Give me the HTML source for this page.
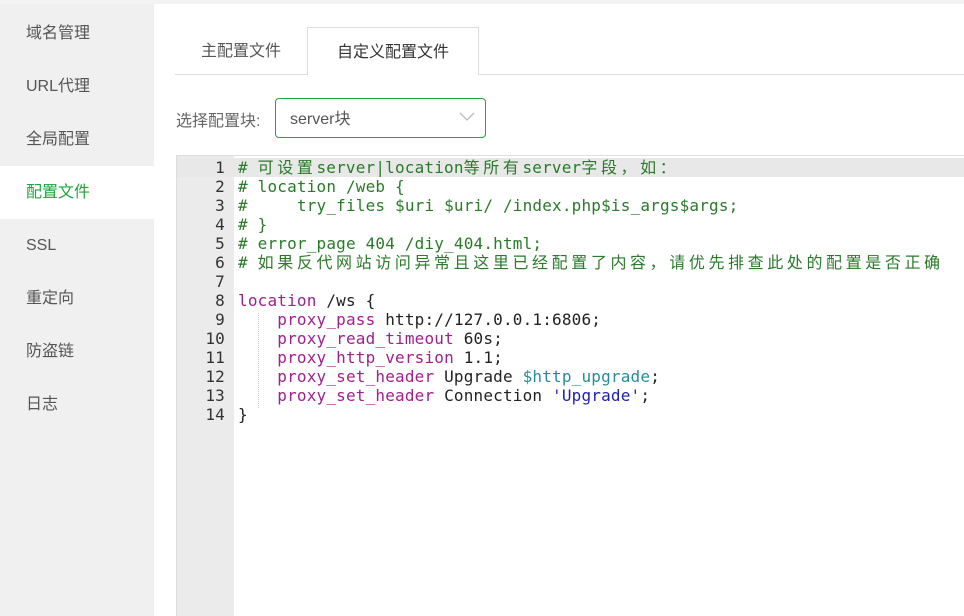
<!DOCTYPE html>
<html><head><meta charset="utf-8"><style>
*{margin:0;padding:0;box-sizing:border-box}
html,body{width:964px;height:616px;overflow:hidden}
body{background:#fff;font-family:"Liberation Sans","Noto Sans CJK SC",sans-serif;position:relative}
.top{position:absolute;left:0;top:0;width:964px;height:4px;background:#f3f3f3}
.side{position:absolute;left:0;top:4px;width:154px;height:612px;background:#f0f0f0;padding-top:3px}
.side div{height:53px;line-height:53px;padding-left:26px;font-size:16px;color:#555}
.side div.on{background:#fff;color:#20a53a}
.tabs{position:absolute;left:175px;top:74px;width:789px;height:1px;background:#ddd}
.tab{position:absolute;top:27px;height:48px;line-height:50px;font-size:16px;color:#555;text-align:center}
.tab.on{background:#fff;border:1px solid #ddd;border-bottom:none;color:#333}
.lbl{position:absolute;left:176px;top:107px;font-size:16px;color:#666}
.sel{position:absolute;left:275px;top:98px;width:211px;height:40px;border:1px solid #20a53a;border-radius:4px;font-size:16px;color:#555;line-height:41px;padding-left:14px}
.sel svg{position:absolute;right:10px;top:13px}
.ed{position:absolute;left:176px;top:155px;width:790px;height:480px;border:1px solid #ddd;border-right:none}
.gut{position:absolute;left:0;top:0;width:57px;height:100%;background:#ebebeb}
.hl{position:absolute;left:0;top:2px;width:790px;height:19px;background:#e8e8e8}
.code{position:absolute;left:0;top:2px;font-family:"DejaVu Sans Mono","Noto Sans CJK SC",monospace;font-size:16px;letter-spacing:0.18px;line-height:19px;white-space:pre;color:#222}
.ln{display:inline-block;width:48px;text-align:right;color:#333}
.tx{display:inline-block;padding-left:13px}
.c{color:#2a7a2a}.k{color:#a0208f}.v{color:#2a8a9a}.s{color:#2020b0}
.cj{letter-spacing:3.6px}
.guide{position:absolute;left:81px;top:157px;width:0;height:95px;border-left:1px dotted #ccc}
</style></head><body>
<div class="top"></div>
<div class="side">
<div>域名管理</div><div>URL代理</div><div>全局配置</div><div class="on">配置文件</div><div>SSL</div><div>重定向</div><div>防盗链</div><div>日志</div>
</div>
<div class="tabs"></div>
<div class="tab" style="left:175px;width:132px">主配置文件</div>
<div class="tab on" style="left:307px;width:172px">自定义配置文件</div>
<div class="lbl">选择配置块:</div>
<div class="sel">server块<svg width="16" height="10" viewBox="0 0 16 10"><path d="M1 1l7 7 7-7" fill="none" stroke="#bbb" stroke-width="1.3"/></svg></div>
<div class="ed">
<div class="gut"></div>
<div class="hl"></div>
<div class="guide"></div>
<div class="code"><span class="ln">1</span><span class="tx c"># <span class="cj">可设置</span>server|location<span class="cj">等所有</span>server<span class="cj">字段，如：</span></span>
<span class="ln">2</span><span class="tx c"># location /web {</span>
<span class="ln">3</span><span class="tx c">#     try_files $uri $uri/ /index.php$is_args$args;</span>
<span class="ln">4</span><span class="tx c"># }</span>
<span class="ln">5</span><span class="tx c"># error_page 404 /diy_404.html;</span>
<span class="ln">6</span><span class="tx c"># <span class="cj">如果反代网站访问异常且这里已经配置了内容，请优先排查此处的配置是否正确</span></span>
<span class="ln">7</span><span class="tx"> </span>
<span class="ln">8</span><span class="tx"><span class="k">location</span> /ws {</span>
<span class="ln">9</span><span class="tx">    <span class="k">proxy_pass</span> http://127.0.0.1:6806;</span>
<span class="ln">10</span><span class="tx">    <span class="k">proxy_read_timeout</span> 60s;</span>
<span class="ln">11</span><span class="tx">    <span class="k">proxy_http_version</span> 1.1;</span>
<span class="ln">12</span><span class="tx">    <span class="k">proxy_set_header</span> Upgrade <span class="v">$http_upgrade</span>;</span>
<span class="ln">13</span><span class="tx">    <span class="k">proxy_set_header</span> Connection <span class="s">'Upgrade'</span>;</span>
<span class="ln">14</span><span class="tx">}</span></div>
</div>
</body></html>
